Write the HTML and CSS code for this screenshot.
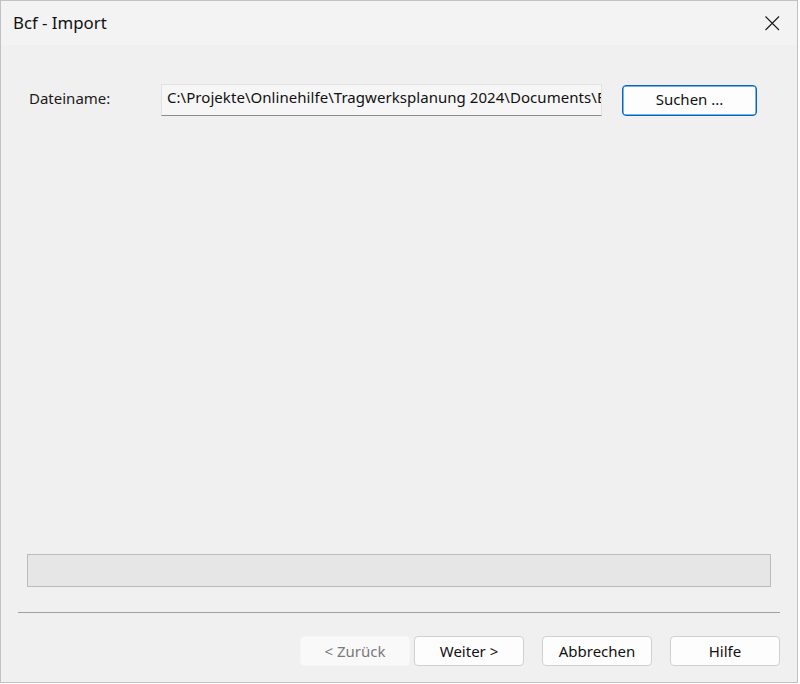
FILE: index.html
```html
<!DOCTYPE html>
<html lang="de">
<head>
<meta charset="utf-8">
<title>Bcf - Import</title>
<link rel="stylesheet" href="styles.css">
</head>
<body>
<div class="window">
  <div class="titlebar">
    <span class="title">Bcf - Import</span>
    <span class="close" aria-label="Schließen">
      <svg width="16" height="16" viewBox="0 0 16 16"><path d="M1.5 1.5 L15 15 M15 1.5 L1.5 15" stroke="#1a1a1a" stroke-width="1.1" fill="none"/></svg>
    </span>
  </div>
  <div class="content">
    <div class="file-row">
      <span class="label">Dateiname:</span>
      <div class="field"><span class="field-text">C:\Projekte\Onlinehilfe\Tragwerksplanung 2024\Documents\Bcf</span></div>
      <button class="btn btn-default search">Suchen ...</button>
    </div>
    <div class="progress"></div>
    <div class="separator"></div>
    <div class="actions">
      <button class="btn disabled back">&lt; Zurück</button>
      <button class="btn next">Weiter &gt;</button>
      <button class="btn cancel">Abbrechen</button>
      <button class="btn help">Hilfe</button>
    </div>
  </div>
</div>
</body>
</html>
```

FILE: styles.css
```css
html, body {
  margin: 0;
  padding: 0;
  background: #ffffff;
}
body {
  font-family: "Noto Sans", "Open Sans", sans-serif;
  color: #1a1a1a;
}
.window {
  box-sizing: border-box;
  width: 798px;
  height: 683px;
  border: 1px solid #c2c2c2;
  display: flex;
  flex-direction: column;
  background: #f0f0f0;
}
.titlebar {
  height: 44px;
  flex: none;
  background: #f3f3f3;
  display: flex;
  align-items: center;
  justify-content: space-between;
  padding: 0 17px 0 12px;
}
.title {
  font-size: 16.8px;
  color: #111;
  position: relative;
  top: -1px;
}
.close {
  display: flex;
  width: 16px;
  height: 16px;
}
.content {
  flex: 1;
  display: flex;
  flex-direction: column;
  padding: 39px 0 16px;
}
.file-row {
  display: flex;
  align-items: center;
  padding-left: 28px;
  height: 32px;
}
.label {
  font-size: 15px;
  width: 132px;
  flex: none;
  position: relative;
  top: -2px;
}
.field {
  box-sizing: border-box;
  width: 441px;
  height: 32px;
  flex: none;
  background: #f6f6f6;
  border: 1px solid #e2e2e2;
  border-bottom-color: #8c8c8c;
  display: flex;
  align-items: center;
  padding: 0 0 6px 5px;
  overflow: hidden;
}
.field-text {
  display: block;
  flex: 1;
  min-width: 0;
  overflow: hidden;
  white-space: nowrap;
  font-size: 15px;
  letter-spacing: 0.05px;
  color: #111;
}
.btn {
  box-sizing: border-box;
  font-family: "Noto Sans", "Open Sans", sans-serif;
  font-size: 15px;
  color: #111;
  background: #fdfdfd;
  border: 1px solid #d0d0d0;
  border-radius: 4px;
  height: 30px;
  width: 110px;
  padding: 0 0 1px;
  margin: 0;
}
.btn-default {
  border-color: #0067c0;
  box-shadow: inset 0 0 0 0.5px #0067c0;
}
.search {
  width: 135px;
  height: 31px;
  margin-left: 20px;
  padding-bottom: 2px;
}
.progress {
  margin: auto 26px 0;
  height: 33px;
  box-sizing: border-box;
  background: #e6e6e6;
  border: 1px solid #bcbcbc;
}
.separator {
  margin: 25px 17px 0;
  height: 1px;
  background: #a0a0a0;
}
.actions {
  margin-top: 23px;
  display: flex;
  justify-content: flex-end;
  padding-right: 17px;
  gap: 18px;
}
.btn.disabled {
  background: #f9f9f9;
  border-color: #f6f6f6;
  color: #7a7a7a;
  width: 110px;
}
.back {
  margin-right: -14px;
}
```
